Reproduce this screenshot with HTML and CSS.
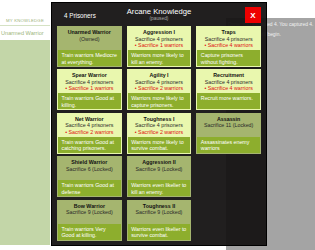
FILE: index.html
```html
<!DOCTYPE html>
<html lang="en">
<head>
    <meta charset="UTF-8">
    <meta name="viewport" content="width=device-width, initial-scale=1.0">
    <title>Arcane Knowledge</title>
    <link rel="stylesheet" href="styles.css">
</head>
<body>
    <div class="page">
        <aside class="knowledge">
            <div class="knowledge-title">MY KNOWLEDGE</div>
            <div class="knowledge-item">Unarmed Warrior</div>
            <div class="knowledge-list"></div>
        </aside>
        <main class="middle"></main>
        <section class="log">
            <p>Done. You sacrificed 4. You captured 4.</p>
            <p>The next hunt will begin.</p>
        </section>
    </div>

    <div class="modal">
        <div class="modal-head">
            <span class="prisoners">4 Prisoners</span>
            <div class="modal-title">
                <h1>Arcane Knowledge</h1>
                <span class="paused">(paused)</span>
            </div>
            <button class="close">X</button>
        </div>

        <div class="grid">
            <div class="card owned">
                <div class="card-top">
                    <div class="card-name">Unarmed Warrior</div>
                    <div>(Owned)</div>
                </div>
                <div class="card-desc">Train warriors Mediocre at everything.</div>
            </div>
            <div class="card">
                <div class="card-top">
                    <div class="card-name">Aggression I</div>
                    <div>Sacrifice 4 prisoners</div>
                    <div class="cost">&bull; Sacrifice 1 warriors</div>
                </div>
                <div class="card-desc">Warriors more likely to kill an enemy.</div>
            </div>
            <div class="card">
                <div class="card-top">
                    <div class="card-name">Traps</div>
                    <div>Sacrifice 4 prisoners</div>
                    <div class="cost">&bull; Sacrifice 4 warriors</div>
                </div>
                <div class="card-desc">Capture prisoners without fighting.</div>
            </div>

            <div class="card">
                <div class="card-top">
                    <div class="card-name">Spear Warrior</div>
                    <div>Sacrifice 4 prisoners</div>
                    <div class="cost">&bull; Sacrifice 1 warriors</div>
                </div>
                <div class="card-desc">Train warriors Good at killing.</div>
            </div>
            <div class="card">
                <div class="card-top">
                    <div class="card-name">Agility I</div>
                    <div>Sacrifice 4 prisoners</div>
                    <div class="cost">&bull; Sacrifice 2 warriors</div>
                </div>
                <div class="card-desc">Warriors more likely to capture prisoners.</div>
            </div>
            <div class="card">
                <div class="card-top">
                    <div class="card-name">Recruitment</div>
                    <div>Sacrifice 4 prisoners</div>
                    <div class="cost">&bull; Sacrifice 4 warriors</div>
                </div>
                <div class="card-desc">Recruit more warriors.</div>
            </div>

            <div class="card">
                <div class="card-top">
                    <div class="card-name">Net Warrior</div>
                    <div>Sacrifice 4 prisoners</div>
                    <div class="cost">&bull; Sacrifice 2 warriors</div>
                </div>
                <div class="card-desc">Train warriors Good at catching prisoners.</div>
            </div>
            <div class="card">
                <div class="card-top">
                    <div class="card-name">Toughness I</div>
                    <div>Sacrifice 4 prisoners</div>
                    <div class="cost">&bull; Sacrifice 2 warriors</div>
                </div>
                <div class="card-desc">Warriors more likely to survive combat.</div>
            </div>
            <div class="card locked">
                <div class="card-top">
                    <div class="card-name">Assassin</div>
                    <div>Sacrifice 11 (Locked)</div>
                </div>
                <div class="card-desc">Assassinates enemy warriors</div>
            </div>

            <div class="card locked">
                <div class="card-top">
                    <div class="card-name">Shield Warrior</div>
                    <div>Sacrifice 6 (Locked)</div>
                </div>
                <div class="card-desc">Train warriors Good at defense</div>
            </div>
            <div class="card locked">
                <div class="card-top">
                    <div class="card-name">Aggression II</div>
                    <div>Sacrifice 9 (Locked)</div>
                </div>
                <div class="card-desc">Warriors even likelier to kill an enemy.</div>
            </div>
            <div class="slot"></div>

            <div class="card locked">
                <div class="card-top">
                    <div class="card-name">Bow Warrior</div>
                    <div>Sacrifice 9 (Locked)</div>
                </div>
                <div class="card-desc">Train warriors Very Good at killing.</div>
            </div>
            <div class="card locked">
                <div class="card-top">
                    <div class="card-name">Toughness II</div>
                    <div>Sacrifice 9 (Locked)</div>
                </div>
                <div class="card-desc">Warriors even likelier to survive combat.</div>
            </div>
        </div>
    </div>
</body>
</html>
```

FILE: styles.css
```css
:root {
    --light: #e9f7ae;
    --sage: #a5b56f;
    --green: #8dae2d;
    --red: #e01010;
}

* {
    box-sizing: border-box;
}

body {
    font-family: 'Liberation Sans', Arial, sans-serif;
    margin: 0;
    width: 315px;
    height: 250px;
    overflow: hidden;
    background-color: #fff;
    position: relative;
}

/* page behind the dialog */
.page {
    display: flex;
    height: 250px;
}

.knowledge {
    width: 50px;
    display: flex;
    flex-direction: column;
    padding-bottom: 5px;
}

.knowledge-title {
    margin-top: 18px;
    font-size: 4.3px;
    letter-spacing: 0.2px;
    text-align: center;
    color: #9bb27c;
    padding-bottom: 2px;
    border-bottom: 1px solid #d5e2c4;
}

.knowledge-item {
    font-size: 5.6px;
    color: #9db67b;
    padding: 4px 0 4px 1px;
    height: 14px;
}

.knowledge-list {
    flex: 1;
    background-color: #c3d6a8;
}

.middle {
    flex: 1;
}

.log {
    width: 89px;
    margin-top: 18px;
    background-color: #a4a4a4;
    color: #f2f2f2;
    font-size: 4.9px;
    padding: 4px 0 0 2px;
    white-space: nowrap;
}

.log p {
    margin: 0 0 4px 0;
    line-height: 6px;
}

/* the dialog */
.modal {
    position: absolute;
    left: 51px;
    top: 2px;
    width: 216px;
    height: 244px;
    background-color: rgba(19, 17, 17, 0.94);
    border: 1px solid #000;
}

.modal-head {
    display: grid;
    grid-template-columns: 1fr auto 1fr;
    height: 23px;
}

.prisoners {
    color: #fff;
    font-size: 6.3px;
    padding: 9px 0 0 12px;
    line-height: 8px;
}

.modal-title {
    text-align: center;
    padding-top: 4px;
}

.modal-title h1 {
    margin: 0;
    color: #fff;
    font-weight: normal;
    font-size: 7.7px;
    line-height: 9px;
}

.paused {
    display: block;
    color: #a8a8a8;
    font-size: 4.8px;
    line-height: 6px;
}

.close {
    justify-self: end;
    margin: 4px 5px 0 0;
    width: 16px;
    height: 16px;
    padding: 0;
    border: none;
    background-color: #ee0000;
    color: #fff;
    font-family: 'Liberation Sans', Arial, sans-serif;
    font-weight: bold;
    font-size: 8px;
}

.grid {
    display: grid;
    grid-template-columns: repeat(3, 1fr);
    grid-auto-rows: 41px;
    column-gap: 5px;
    row-gap: 2.4px;
    padding: 0 5px;
}

.card {
    display: flex;
    flex-direction: column;
    background-color: var(--light);
    border: 1px solid var(--light);
    font-size: 5.3px;
    line-height: 6.5px;
    color: #2a2a2a;
}

.card-top {
    flex: 1;
    text-align: center;
    padding-top: 2px;
}

.card-name {
    font-weight: bold;
    color: #111;
}

.cost {
    color: var(--red);
}

.card-desc {
    height: 16px;
    background-color: var(--green);
    color: #fff;
    padding: 2px 2px 0 3.5px;
}

.card.owned,
.card.locked {
    background-color: var(--sage);
    border-color: var(--sage);
}
```
